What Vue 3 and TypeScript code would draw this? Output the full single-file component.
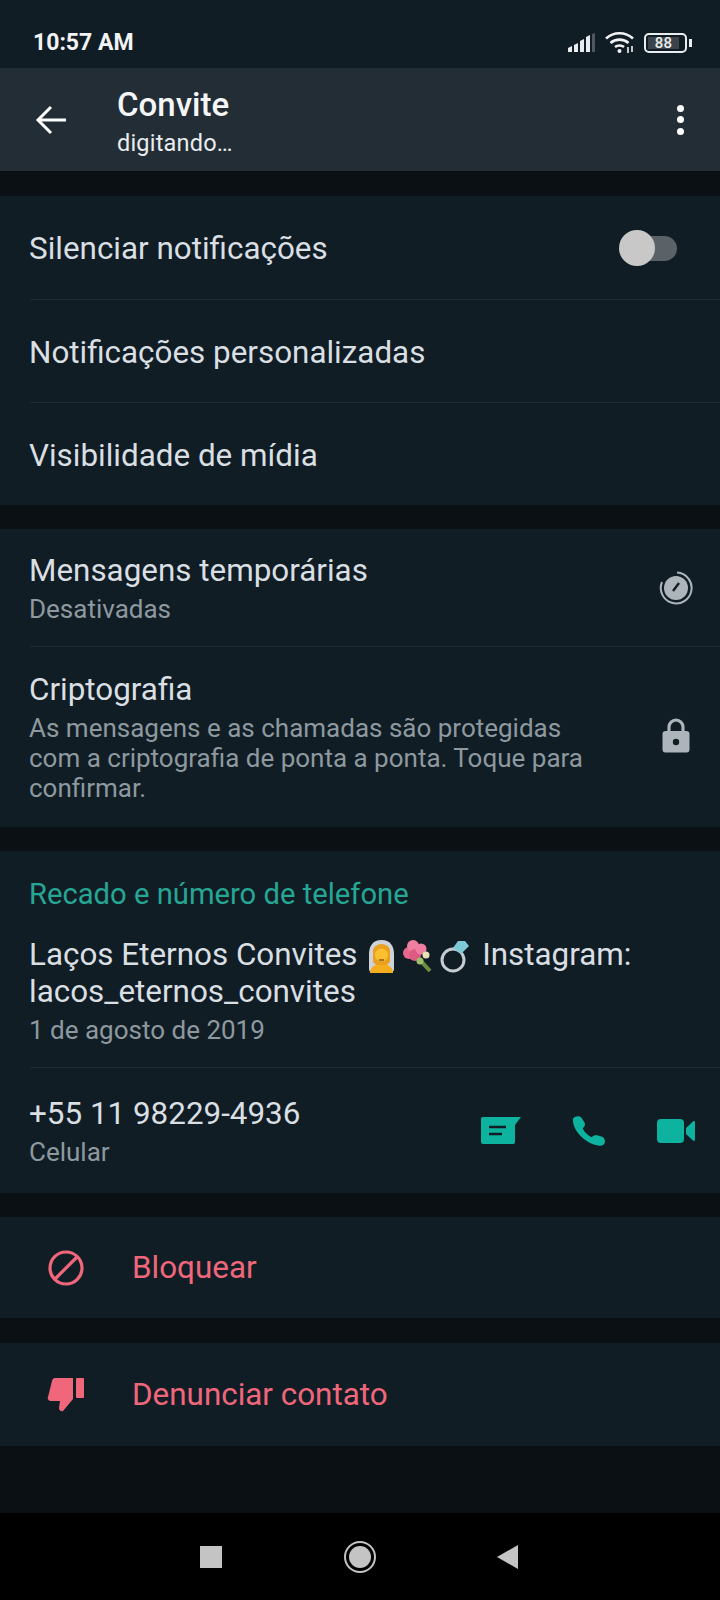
<template>
  <div class="screen">
    <div class="status-bar">
      <span class="clock">10:57 AM</span>
      <div class="status-icons">
        <svg width="28" height="21" viewBox="0 0 28 21">
          <path d="M0 20v-4l4-2v6z" fill="#e9edef" />
          <path d="M6 20v-7l4-2v9z" fill="#e9edef" />
          <path d="M12 20V9l4-2v13z" fill="#e9edef" />
          <path d="M18 20V5l4-2v17z" fill="#e9edef" />
          <path d="M24 20V2l3-1v19z" fill="#4e585e" />
        </svg>
        <svg width="30" height="23" viewBox="0 0 30 23" fill="none" stroke="#f1f3f4" stroke-width="2.6">
          <path d="M1 7.500C8.500 0.500 20.500 0.500 28 7.500" />
          <path d="M5.500 12C10.500 7.500 18.500 7.500 23.500 12" />
          <path d="M10 16C12.500 14 16.500 14 19 16" />
          <circle cx="14.500" cy="20" r="2" fill="#f1f3f4" stroke="none" />
          <path d="M23 16v6M27 15v6" stroke-width="1.6" />
        </svg>
        <div class="battery">
          <div class="battery-body"><span class="battery-level">88</span></div>
          <div class="battery-tip"></div>
        </div>
      </div>
    </div>

    <header class="app-bar">
      <svg class="back" width="34" height="30" viewBox="0 0 34 30" fill="none" stroke="#fff" stroke-width="3">
        <path d="M31 15H4" />
        <path d="M16 2L3 15l13 13" />
      </svg>
      <div class="app-title">
        <h1>Convite</h1>
        <p>digitando…</p>
      </div>
      <div class="dots"><i></i><i></i><i></i></div>
    </header>

    <section class="group first">
      <div class="row simple">
        <span class="title">Silenciar notificações</span>
        <div class="switch"><div class="knob"></div></div>
      </div>
      <div class="row simple">
        <span class="title">Notificações personalizadas</span>
      </div>
      <div class="row simple">
        <span class="title">Visibilidade de mídia</span>
      </div>
    </section>

    <section class="group">
      <div class="row temp">
        <div>
          <div class="title">Mensagens temporárias</div>
          <div class="sub">Desativadas</div>
        </div>
        <svg class="side-icon" width="34" height="34" viewBox="0 0 34 34">
          <circle cx="17" cy="17" r="12" fill="#aeb5ba" />
          <path d="M14 20l6-8" stroke="#111d25" stroke-width="2.4" fill="none" />
          <path d="M18 1.600A15.400 15.400 0 1 1 3 11" stroke="#aeb5ba" stroke-width="2" fill="none" />
        </svg>
      </div>
      <div class="row crypto">
        <div>
          <div class="title">Criptografia</div>
          <div class="sub">As mensagens e as chamadas são protegidas<br />com a criptografia de ponta a ponta. Toque para<br />confirmar.</div>
        </div>
        <svg class="lock" width="28" height="35" viewBox="0 0 28 35">
          <path d="M7 15V9a7 7 0 0 1 14 0v6" fill="none" stroke="#aeb5ba" stroke-width="3.200" />
          <rect x="0.500" y="13" width="27" height="21.500" rx="3" fill="#aeb5ba" />
          <circle cx="14" cy="24" r="3.200" fill="#111d25" />
        </svg>
      </div>
    </section>

    <section class="group">
      <div class="about">
        <div class="label">Recado e número de telefone</div>
        <div class="title">
          Laços Eternos Convites
          <span class="emojis">
            <svg width="29" height="33" viewBox="0 0 29 33">
              <path d="M14.500 0C6 0 2 6 2 14v15c0 2 1 3 3 3h19c2 0 3-1 3-3V14C27 6 23 0 14.500 0z" fill="#cdd3d8" />
              <path d="M3 33c0-6 5-9 11.500-9S26 27 26 33z" fill="#f5ad1d" />
              <path d="M6 22V11c0-4 4-7 8.500-7S23 7 23 11v11l-3 3H9z" fill="#e9a020" />
              <circle cx="14.500" cy="15" r="6.500" fill="#fbc02d" />
              <path d="M12 20h5" stroke="#7a3d10" stroke-width="1.200" />
            </svg>
            <svg width="31" height="33" viewBox="0 0 31 33">
              <path d="M17 19l11 12" stroke="#6b8f3c" stroke-width="4" />
              <circle cx="7" cy="13" r="6" fill="#e8688c" />
              <circle cx="11" cy="6" r="6" fill="#ef7fa0" />
              <circle cx="13" cy="15" r="6" fill="#dd5a82" />
              <circle cx="19" cy="9" r="5.500" fill="#ef7fa0" />
              <circle cx="24" cy="15" r="3.500" fill="#e9e2b6" />
              <circle cx="18" cy="21" r="3.500" fill="#9cc06a" />
            </svg>
            <svg width="31" height="33" viewBox="0 0 31 33">
              <circle cx="14" cy="20" r="11" fill="none" stroke="#c5cbd0" stroke-width="3" />
              <path d="M14 8l5-7h7l4 5-8 8z" fill="#7fc8d8" />
            </svg>
          </span>
          Instagram:<br />lacos_eternos_convites
        </div>
        <div class="sub">1 de agosto de 2019</div>
      </div>
      <div class="row phone">
        <div>
          <div class="title">+55 11 98229-4936</div>
          <div class="sub">Celular</div>
        </div>
        <div class="actions">
          <svg width="42" height="29" viewBox="0 0 42 29">
            <path d="M3 1h38l-6 8v17a2 2 0 0 1-2 2H3a2 2 0 0 1-2-2V3a2 2 0 0 1 2-2z" fill="#0db39e" />
            <path d="M9 11h17M9 18h13" stroke="#111d25" stroke-width="2.600" />
          </svg>
          <svg class="call" width="33" height="32" viewBox="0 0 34 33">
            <path d="M1 4c1-3 7-4 9-1l3 5c1 2 0 4-2 6 2 4 5 7 9 9 2-2 4-2.500 6-2l5 1.500c2 .5 3 3 3 5-.5 3-3 5-7 4C13 29 0 15 1 4z" fill="#0db39e" />
          </svg>
          <svg width="38" height="24" viewBox="0 0 38 24">
            <rect x="0" y="0" width="27" height="24" rx="4" fill="#0db39e" />
            <path d="M29 9l7-6.500c1-.8 2-.3 2 .8v17.400c0 1.100-1 1.600-2 .8L29 15z" fill="#0db39e" />
          </svg>
        </div>
      </div>
    </section>

    <section class="group">
      <div class="row danger block">
        <svg width="38" height="38" viewBox="0 0 38 38" fill="none" stroke="#f0677c" stroke-width="3.200">
          <circle cx="19" cy="19" r="16" />
          <path d="M8 30L30 8" />
        </svg>
        <span>Bloquear</span>
      </div>
    </section>

    <section class="group last">
      <div class="row danger">
        <svg width="38" height="36" viewBox="0 0 38 36">
          <path d="M8 1h18v21L16 34c-2 1-4-1-4-3l1-7H4c-2 0-4-2-3-4L5 4c.5-2 1.500-3 3-3z" fill="#f0677c" />
          <rect x="29" y="1" width="8" height="20" rx="1" fill="#f0677c" />
        </svg>
        <span>Denunciar contato</span>
      </div>
    </section>

    <div class="filler"></div>

    <nav class="nav-bar">
      <div class="nav-square"></div>
      <div class="nav-circle"><div></div></div>
      <svg width="21" height="24" viewBox="0 0 21 24"><path d="M0 12L21 0v24z" fill="#c4c4c4" /></svg>
    </nav>
  </div>
</template>

<script setup lang="ts">
</script>

<style>
  body {
    background: #0a1014;
  }
</style>

<style scoped>
  .screen {
    width: 720px;
    height: 1600px;
    display: flex;
    flex-direction: column;
    background: #0a1014;
    font-family: Roboto, "Noto Sans", sans-serif;
    color: #d9dfe2;
    overflow: hidden;
  }

  .status-bar {
    height: 68px;
    flex: none;
    display: flex;
    justify-content: space-between;
    align-items: center;
    padding: 17px 28px 0 33px;
    box-sizing: border-box;
    background: #101d25;
  }

  .clock {
    font-size: 23px;
    font-weight: 700;
    color: #f1f3f4;
  }

  .status-icons {
    display: flex;
    align-items: center;
    gap: 9px;
  }

  .battery {
    display: flex;
    align-items: center;
    gap: 2px;
  }

  .battery-body {
    width: 43px;
    height: 20px;
    box-sizing: border-box;
    padding: 2px;
    border: 2px solid #e9edef;
    border-radius: 5px;
    display: flex;
  }

  .battery-level {
    width: 88%;
    background: #3d4449;
    font-size: 15px;
    font-weight: 500;
    line-height: 12px;
    text-align: center;
    color: #e9edef;
  }

  .battery-tip {
    width: 3px;
    height: 8px;
    background: #e9edef;
  }

  .app-bar {
    height: 103px;
    flex: none;
    display: flex;
    align-items: center;
    background: #232d36;
    padding: 0 36px 0 35px;
    box-sizing: border-box;
  }

  .back {
    flex: none;
    margin-right: 48px;
  }

  .app-title {
    flex: 1;
    padding-top: 4px;
  }

  .app-title h1 {
    margin: 0;
    font-size: 33px;
    line-height: 40px;
    font-weight: 500;
    color: #f4f6f7;
  }

  .app-title p {
    margin: 2px 0 0;
    font-size: 23.500px;
    line-height: 32px;
    letter-spacing: 0.2px;
    color: #e9edef;
  }

  .dots {
    display: flex;
    flex-direction: column;
    gap: 4.500px;
  }

  .dots i {
    display: block;
    width: 7px;
    height: 7px;
    border-radius: 50%;
    background: #fff;
  }

  .group {
    margin-top: 24px;
    background: #111d25;
    flex: none;
  }

  .group.first {
    margin-top: 25px;
  }

  .group.last {
    margin-top: 25px;
  }

  .row {
    display: flex;
    align-items: center;
    justify-content: space-between;
    margin-left: 30px;
    padding-right: 24px;
    box-sizing: border-box;
    border-top: 1px solid #1f2b33;
  }

  .row:first-child {
    border-top: none;
  }

  .simple {
    height: 103px;
    padding-top: 2px;
  }

  .title {
    font-size: 31.400px;
    line-height: 37px;
    color: #d9dfe2;
    margin-left: -1px;
  }

  .sub {
    font-size: 26px;
    line-height: 30px;
    color: #8d999f;
    margin-top: 5px;
    margin-left: -1px;
  }

  .switch {
    position: relative;
    width: 40px;
    height: 25px;
    margin-right: 19px;
    border-radius: 13px;
    background: #5a6268;
  }

  .knob {
    position: absolute;
    left: -18px;
    top: -6px;
    width: 36px;
    height: 36px;
    border-radius: 50%;
    background: #c8c8c8;
  }

  .temp {
    height: 117px;
    padding-right: 27px;
  }

  .crypto {
    height: 181px;
    padding-right: 30px;
  }

  .lock {
    margin-top: -3px;
  }

  .about {
    padding: 26px 30px 22px;
  }

  .label {
    font-size: 29.200px;
    line-height: 34px;
    color: #26a694;
    margin-bottom: 25px;
    margin-left: -1px;
  }

  .emojis {
    display: inline-flex;
    align-items: center;
    gap: 6px;
    margin: 0 4px 0 2px;
    vertical-align: -8px;
    height: 33px;
  }

  .phone {
    height: 126px;
    border-top: 1px solid #1f2b33;
    padding-right: 25px;
  }

  .actions {
    display: flex;
    align-items: center;
    gap: 50px;
  }

  .call {
    margin-right: 2px;
  }

  .danger {
    height: 103px;
    justify-content: flex-start;
    margin-left: 47px;
    gap: 47px;
    font-size: 31.400px;
    color: #f0677c;
  }

  .danger.block {
    height: 101px;
  }

  .filler {
    flex: 1;
  }

  .nav-bar {
    height: 87px;
    flex: none;
    background: #000;
    display: flex;
    align-items: center;
    justify-content: center;
    gap: 121.500px;
    padding-right: 2px;
  }

  .nav-square {
    width: 22px;
    height: 22px;
    background: #c4c4c4;
  }

  .nav-circle {
    width: 32px;
    height: 32px;
    box-sizing: border-box;
    border: 2px solid #c4c4c4;
    border-radius: 50%;
    display: flex;
    align-items: center;
    justify-content: center;
  }

  .nav-circle div {
    width: 22px;
    height: 22px;
    border-radius: 50%;
    background: #c4c4c4;
  }
</style>
